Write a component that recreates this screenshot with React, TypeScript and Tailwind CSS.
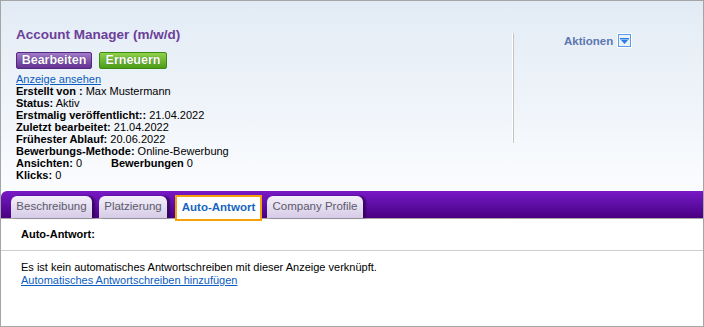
import React from "react";

const font = { fontFamily: '"Liberation Sans", Arial, sans-serif' };

function Tab({ label, className = "" }: { label: string; className?: string }) {
  return (
    <div
      className={`h-[22px] flex items-center justify-center whitespace-nowrap rounded-t-[6px] bg-gradient-to-b from-[#f4f0fa] to-[#d6cbe6] text-[11.5px] text-[#5b5b6b] shadow-[3px_0_2px_rgba(40,0,70,0.6)] ${className}`}
    >
      {label}
    </div>
  );
}

export default function App() {
  return (
    <div style={font} className="w-[704px] h-[327px] border border-[#a5a5a5] bg-white flex flex-col text-black">
      {/* header */}
      <div className="h-[190px] flex bg-gradient-to-b from-[#e2ebf5] to-[#fbfcfe]">
        <div className="w-[511px] pl-[15px] pt-[26px] flex flex-col">
          <div className="text-[13.5px] leading-[16px] font-bold text-[#6b4099]">Account Manager (m/w/d)</div>
          <div className="flex gap-[7px] mt-[9px]">
            <div className="h-[17px] w-[76px] flex items-center justify-center rounded-[2px] border border-[#55287f] bg-gradient-to-b from-[#a27bcb] to-[#643293] text-white font-bold text-[12.5px] [text-shadow:0_0_1px_#3a1060]">
              Bearbeiten
            </div>
            <div className="h-[17px] w-[68px] flex items-center justify-center rounded-[2px] border border-[#3d8a12] bg-gradient-to-b from-[#8fd24a] to-[#4c9c18] text-white font-bold text-[12.5px] [text-shadow:0_0_1px_#2a6008]">
              Erneuern
            </div>
          </div>
          <div className="mt-[4px] text-[11px] leading-[12px]">
            <div className="text-[#0b5cc0] underline">Anzeige ansehen</div>
            <div><b>Erstellt von :</b> Max Mustermann</div>
            <div><b>Status:</b> Aktiv</div>
            <div><b>Erstmalig veröffentlicht::</b> 21.04.2022</div>
            <div><b>Zuletzt bearbeitet:</b> 21.04.2022</div>
            <div><b>Frühester Ablauf:</b> 20.06.2022</div>
            <div><b>Bewerbungs-Methode:</b> Online-Bewerbung</div>
            <div className="flex">
              <div className="w-[95px]"><b>Ansichten:</b> 0</div>
              <div><b>Bewerbungen</b> 0</div>
            </div>
            <div><b>Klicks:</b> 0</div>
          </div>
        </div>
        <div className="mt-[32px] h-[110px] flex">
          <div className="w-px bg-white" />
          <div className="w-px bg-[#c4c4c4]" />
        </div>
        <div className="flex-1 pt-[32px] pl-[50px] flex items-start">
          <div className="text-[11.5px] font-bold text-[#5b77b0] leading-[15px] mt-[1px]">Aktionen</div>
          <div className="ml-[4px] w-[15px] h-[15px] border border-white bg-[#5b9be8] p-px">
            <div className="w-full h-full bg-[#eaf2fc] flex items-center justify-center">
              <svg width="9" height="6" viewBox="0 0 9 6">
                <rect x="0" y="0" width="9" height="1.5" fill="#2f7ae0" />
                <path d="M1 2 L8 2 L4.5 6 Z" fill="#2f7ae0" />
              </svg>
            </div>
          </div>
        </div>
      </div>
      {/* tab bar */}
      <div className="h-[28px] border-b border-[#a8a8a8] rounded-tl-[6px] bg-gradient-to-b from-[#7a18c6] via-[#6010a8] via-45% to-[#4a0082] flex items-end pl-[10px]">
        <Tab label="Beschreibung" className="w-[81px]" />
        <Tab label="Platzierung" className="w-[68px] ml-[7px]" />
        <div className="ml-[10px] w-[83px] h-[22px] bg-white outline-2 outline-[#f5a20a] flex items-center justify-center whitespace-nowrap text-[11.5px] font-bold text-[#1565c0] relative top-[1px]">
          Auto-Antwort
        </div>
        <Tab label="Company Profile" className="w-[96px] ml-[7px]" />
      </div>
      {/* content */}
      <div className="h-[32px] border-b border-[#cfcfcf] pl-[20px] flex items-center text-[11px] font-bold">
        Auto-Antwort:
      </div>
      <div className="pl-[20px] pt-[10px] text-[11px] leading-[13px]">
        <div>Es ist kein automatisches Antwortschreiben mit dieser Anzeige verknüpft.</div>
        <div className="text-[#0b5cc0] underline">Automatisches Antwortschreiben hinzufügen</div>
      </div>
    </div>
  );
}
